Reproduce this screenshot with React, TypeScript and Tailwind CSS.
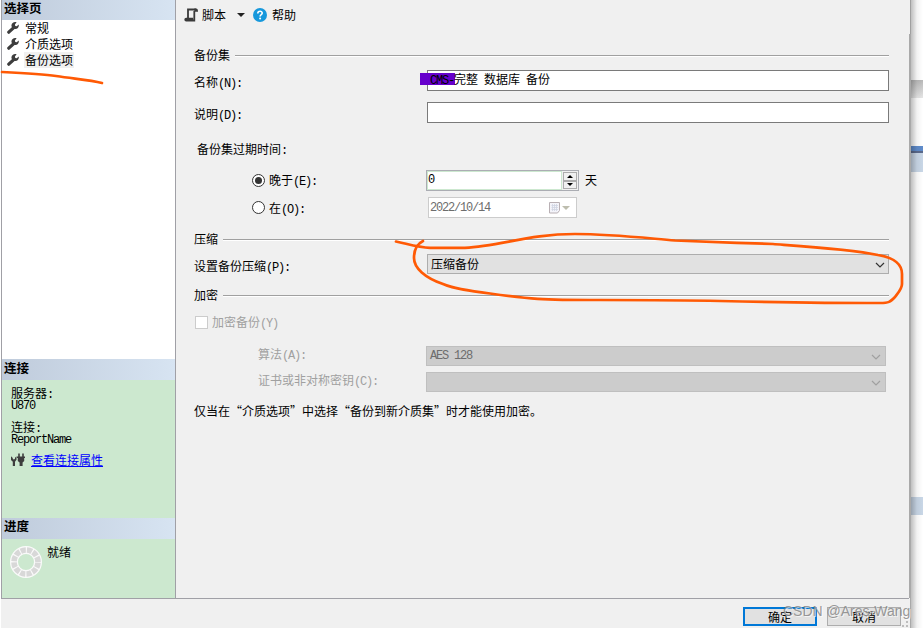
import React, { ReactNode } from "react";

// Latin runs are squeezed to half the width of a Chinese character
const En = ({ children }: { children: ReactNode }) => (
  <span className="font-['Liberation_Mono'] leading-none tracking-[-1.2px] whitespace-pre">
    {children}
  </span>
);

const Wrench = () => (
  <svg width="12" height="12" viewBox="0 0 12 12" className="shrink-0">
    <path d="M1.8 10.2 L6.5 5.8" stroke="#3d3d3d" strokeWidth="3.2" strokeLinecap="round" />
    <path
      d="M9.6 .3 L7.9 2.5 L8.3 3.9 L9.7 4.2 L11.8 2.5 C12.2 5.4 10.2 7.6 7.6 7 L4.9 5.6 L4.4 3.6 C4.6 1 7.2 -.6 9.6 .3Z"
      fill="#3d3d3d"
    />
  </svg>
);

const ScriptIcon = () => (
  <svg width="15" height="14" viewBox="0 0 15 14" className="shrink-0">
    <path
      d="M4 10V1.5H12M10.3 3V12.5H2.2C.9 12.5 .9 10.6 2.2 10.6H8.2V12"
      fill="none"
      stroke="#3a3a3a"
      strokeWidth="1.8"
    />
    <path d="M10.3 .6H12.4C14 .6 14 3.8 14 3.8H10.3Z" fill="#3a3a3a" />
  </svg>
);

const PlugIcon = () => (
  <svg width="15" height="14" viewBox="0 0 15 14" className="shrink-0">
    <path d="M0 3.2L1.8 5V6L3 6.5L4 5.8V4.8L5.5 3.2V6.8L4 8.8V13H1.8V8.8L0 7Z" fill="#3d3d3d" />
    <path d="M8 .5V4M12 .5V4" stroke="#3d3d3d" strokeWidth="1.6" />
    <path d="M6 3.5H14V5H13.2V8L11.6 9.5V13H8.6V9.5L6.8 8V5H6Z" fill="#3d3d3d" />
  </svg>
);

const Spinner = () => (
  <svg width="32" height="32" viewBox="0 0 32 32" className="shrink-0">
    <circle cx="16" cy="16" r="12" fill="none" stroke="#fafafa" strokeWidth="8" />
    <circle
      cx="16"
      cy="16"
      r="12"
      fill="none"
      stroke="#d8d8d8"
      strokeWidth="5.6"
      strokeDasharray="5.1 1.183"
      strokeDashoffset="-.6"
    />
  </svg>
);

const Chevron = ({ className }: { className: string }) => (
  <svg width="10" height="6" viewBox="0 0 10 6" className={className}>
    <path d="M1 1L5 5L9 1" fill="none" stroke="currentColor" strokeWidth="1.2" />
  </svg>
);

const PanelTitle = ({ children, className }: { children: ReactNode; className: string }) => (
  <div
    className={`shrink-0 bg-linear-to-r from-[#bfcbdb] to-[#d7e4f2] pl-[2px] text-[12.5px] font-bold leading-4 ${className}`}
  >
    {children}
  </div>
);

const SectionTitle = ({ children }: { children: ReactNode }) => (
  <div className="flex h-4 items-center pl-[18px] pr-5">
    <span>{children}</span>
    <span className="ml-[5px] mt-[2px] h-[2px] flex-1 border-t border-[#a0a0a0] bg-white" />
  </div>
);

const pages = ["常规", "介质选项", "备份选项"];

function Sidebar() {
  return (
    <aside className="flex w-[175px] shrink-0 flex-col border-x border-[#a0a0a6] bg-white">
      <PanelTitle className="h-5">选择页</PanelTitle>
      <ul className="h-[339px]">
        {pages.map((page) => (
          <li key={page} className="flex h-4 items-center pl-[5px]">
            <Wrench />
            <span
              className={`ml-[5px] px-[1px] leading-4 ${page === "备份选项" ? "bg-[#f0f0f0]" : ""}`}
            >
              {page}
            </span>
          </li>
        ))}
      </ul>
      <PanelTitle className="h-[21px] pt-[1px]">连接</PanelTitle>
      <div className="h-[138px] bg-[#cce8cf] pl-[9px] pt-[5px]">
        <p className="h-4 leading-4">
          服务器<En>:</En>
        </p>
        <p className="mt-px h-[11px] font-['Liberation_Mono'] leading-[9px] tracking-[-1.2px]">U870</p>
        <p className="mt-[6px] h-4 leading-4">
          连接<En>:</En>
        </p>
        <p className="h-3 font-['Liberation_Mono'] leading-[11px] tracking-[-1.2px]">ReportName</p>
        <div className="mt-[5px] flex items-center">
          <PlugIcon />
          <a className="ml-[5px] leading-4 text-[#0000ff] underline">查看连接属性</a>
        </div>
      </div>
      <PanelTitle className="h-[21px]">进度</PanelTitle>
      <div className="flex flex-1 bg-[#cce8cf] pl-2 pt-[7px]">
        <Spinner />
        <span className="ml-[5px] -mt-[2px] leading-4">就绪</span>
      </div>
    </aside>
  );
}

function Toolbar() {
  return (
    <div className="flex h-[30px] items-center pl-2">
      <ScriptIcon />
      <span className="ml-[3px]">脚本</span>
      <span className="ml-[11px] border-x-4 border-t-4 border-x-transparent border-t-[#222]" />
      <svg width="14" height="14" viewBox="0 0 14 14" className="ml-2">
        <circle cx="7" cy="7" r="7" fill="#1698dc" />
        <path
          d="M4.8 5.5C4.8 2.4 9.4 2.6 9.2 5.3C9.1 6.7 7.1 6.6 7.1 8.5"
          fill="none"
          stroke="white"
          strokeWidth="1.6"
        />
        <circle cx="7.1" cy="10.6" r="1" fill="white" />
      </svg>
      <span className="ml-[5px]">帮助</span>
    </div>
  );
}

function BackupOptions() {
  return (
    <main className="w-[733px] shrink-0">
      <Toolbar />

      <div className="mt-[17px]">
        <SectionTitle>备份集</SectionTitle>
      </div>
      <div className="mt-[7px] flex h-[21px] pl-[18px]">
        <label className="w-[233px] pt-[4px]">
          名称<En>(N):</En>
        </label>
        <div className="relative w-[462px] border border-[#7a7a7a] bg-white pl-[2px]">
          <span className="absolute left-[-8px] top-[2px] h-3 w-[35px] bg-[#6600cc]" />
          <span className="relative block leading-4">
            <En>CMS-</En>完整<En> </En>数据库<En> </En>备份
          </span>
        </div>
      </div>
      <div className="mt-[11px] flex h-[21px] pl-[18px]">
        <label className="w-[233px] pt-[4px]">
          说明<En>(D):</En>
        </label>
        <div className="w-[462px] border border-[#7a7a7a] bg-white" />
      </div>

      <p className="mt-[18px] h-4 pl-[21px]">
        备份集过期时间<En>:</En>
      </p>
      <div className="mt-[13px] flex h-[21px] pl-[76px]">
        <span className="mt-[4px] flex size-[13px] items-center justify-center rounded-full border border-[#333] bg-white">
          <span className="size-[7px] rounded-full bg-[#333]" />
        </span>
        <label className="ml-[4px] w-[157px] pt-[2px]">
          晚于<En>(E):</En>
        </label>
        <div className="flex w-[153px] border border-[#abadb3] bg-white">
          <span className="flex-1 border border-[#cce8cf] leading-[12px]">
            <En>0</En>
          </span>
          <span className="flex w-4 flex-col bg-[#f0f0f0] p-[1px]">
            <span className="flex flex-1 items-center justify-center border border-[#acacac]">
              <span className="border-x-[3px] border-b-[3px] border-x-transparent border-b-black" />
            </span>
            <span className="flex flex-1 items-center justify-center border border-[#acacac]">
              <span className="border-x-[3px] border-t-[3px] border-x-transparent border-t-black" />
            </span>
          </span>
        </div>
        <span className="ml-[6px] pt-[2px]">天</span>
      </div>
      <div className="mt-[6px] flex h-[21px] pl-[76px]">
        <span className="mt-[4px] size-[13px] rounded-full border border-[#333] bg-white" />
        <label className="ml-[4px] w-[159px] pt-[3px]">
          在<En>(O):</En>
        </label>
        <div className="flex w-[149px] items-center border border-[#cccccc] bg-white pl-[1px] pr-[6px] text-[#6d6d6d]">
          <En>2022/10/14</En>
          <svg width="12" height="13" viewBox="0 0 12 13" className="ml-auto">
            <path d="M.5 1.5H10.5V9.5L8.5 12H.5Z" fill="#f4f4fa" stroke="#b9b0b4" />
            <path
              d="M2.5 4.5H9M2.5 6.5H9M2.5 8.5H9M3.5 3V10M5.5 3V10M7.5 3V10"
              stroke="#cfd4e2"
              strokeWidth=".8"
            />
          </svg>
          <span className="ml-[1px] border-x-4 border-t-4 border-x-transparent border-t-[#bdbdae]" />
        </div>
      </div>

      <div className="mt-[13px]">
        <SectionTitle>压缩</SectionTitle>
      </div>
      <div className="mt-[7px] flex h-5 pl-[18px]">
        <label className="w-[233px] pt-[4px]">
          设置备份压缩<En>(P):</En>
        </label>
        <div className="flex w-[462px] items-center border border-[#adadad] bg-[#e1e1e1] pl-[3px] pr-[3px]">
          压缩备份
          <Chevron className="ml-auto mt-[2px] text-[#333]" />
        </div>
      </div>

      <div className="mt-[13px]">
        <SectionTitle>加密</SectionTitle>
      </div>
      <div className="mt-[11px] flex h-4 items-center pl-[19px] text-[#a0a0a0]">
        <span className="size-[13px] border border-[#cccccc] bg-white" />
        <label className="ml-[4px]">
          加密备份<En>(Y)</En>
        </label>
      </div>
      <div className="mt-[16px] flex h-5 pl-[82px] text-[#a0a0a0]">
        <label className="w-[168px]">
          算法<En>(A):</En>
        </label>
        <div className="flex w-[460px] items-center border border-[#bfbfbf] bg-[#cccccc] pl-[3px] pr-[4px] text-[#6d6d6d]">
          <En>AES 128</En>
          <Chevron className="ml-auto mt-[2px] text-[#a0a0a0]" />
        </div>
      </div>
      <div className="mt-[6px] flex h-5 pl-[82px] text-[#a0a0a0]">
        <label className="w-[168px]">
          证书或非对称密钥<En>(C):</En>
        </label>
        <div className="flex w-[460px] items-center border border-[#bfbfbf] bg-[#cccccc] pr-[4px]">
          <Chevron className="ml-auto mt-[2px] text-[#a0a0a0]" />
        </div>
      </div>
      <p className="mt-[11px] pl-[18px]">
        仅当在“介质选项”中选择“备份到新介质集”时才能使用加密。
      </p>
    </main>
  );
}

// Window edge, its shadow and whatever peeks out behind the dialog
function WindowEdge() {
  return (
    <div className="flex w-[14px] shrink-0">
      <div className="flex w-[2px] flex-col">
        <div className="h-[34px] border-r border-[#a0a0a0] bg-[#f0f0f0]" />
        <div className="h-[564px] bg-[#a9a9a9]" />
        <div className="flex-1 border-r border-[#a9a9a9] bg-[#f0f0f0]" />
      </div>
      <div className="relative w-3 bg-white">
        <div className="flex h-full flex-col">
          <div className="mt-20 h-[18px] bg-linear-to-b from-[#b8b8b8] to-[#e6e6e6]" />
          <div className="mt-12 h-[5px] bg-[#5f8ccb]" />
          <div className="h-[2px] bg-[#5b6a8c]" />
          <div className="h-[19px] bg-[#c9d7e7]" />
          <div className="mt-[325px] h-[18px] bg-[#c9d7e7]" />
        </div>
        <div className="absolute inset-0 bg-linear-to-r from-black/25 via-black/5 to-transparent" />
      </div>
    </div>
  );
}

export default function App() {
  return (
    <div className="relative flex h-[628px] w-[923px] overflow-hidden bg-white font-['Noto_Sans_CJK_SC',sans-serif] text-[12px] leading-4 text-black">
      <div className="ml-px flex w-[908px] shrink-0 flex-col bg-[#f0f0f0]">
        <div className="flex h-[599px] border-b border-[#a0a0a6]">
          <Sidebar />
          <BackupOptions />
        </div>
        <footer className="flex flex-1 pl-[742px] pt-2">
          <button className="h-[19px] w-[74px] border-2 border-[#0078d7] bg-[#e1e1e1] leading-4">
            确定
          </button>
          <button className="ml-[10px] h-[19px] w-[74px] border border-[#adadad] bg-[#e1e1e1] leading-4">
            取消
          </button>
        </footer>
      </div>
      <WindowEdge />

      <span className="absolute left-[783px] top-[603px] whitespace-nowrap font-['Liberation_Sans'] text-[14px] leading-4 text-[#808080]/80 [text-shadow:1px_1px_0_#ffffffaa]">
        CSDN @Ares-Wang
      </span>

      {/* size grip */}
      <svg className="absolute left-[902px] top-[621px]" width="7" height="7" viewBox="0 0 7 7">
        <path d="M4 0H6V2H4ZM0 4H2V6H0ZM4 4H6V6H4Z" fill="#bdbdbd" />
      </svg>

      <svg
        className="pointer-events-none absolute inset-0"
        width="923"
        height="628"
        fill="none"
        stroke="#ff5a05"
        strokeWidth="2.7"
        strokeLinecap="round"
        strokeLinejoin="round"
      >
        <path d="M2 72C22 73 42 74 56 76C76 79 90 80 102 83" />
        <path d="M396 241.5C408 244 418 247.5 430 247.8H465C500 246 530 234 575 234C610 234 640 237.5 675 240.5C710 242 740 243 773 244C800 246 850 249 878 255C895 258 902 264 902 274V284C902 289 898 293 895 297C890 302 889 303 880 303C850 303 790 302.5 720 301C680 300 650 300 600 300C540 300 530 299 490 293.5C470 291 455 289 443 284C425 278 414 268 414 258C414 249 417 244 423 241" />
      </svg>
    </div>
  );
}
